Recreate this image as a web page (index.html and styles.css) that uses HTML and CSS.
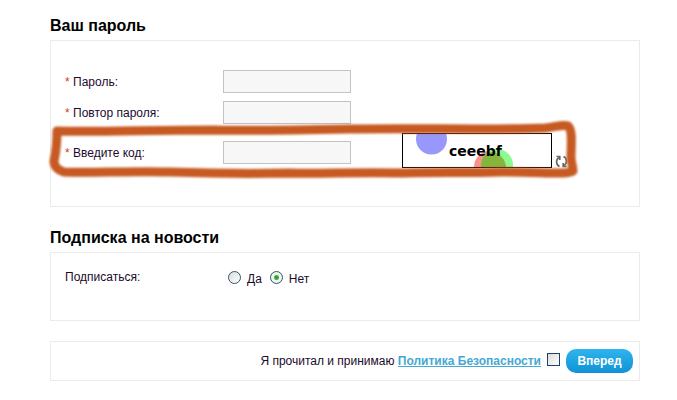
FILE: index.html
```html
<!DOCTYPE html>
<html lang="ru">
<head>
    <meta charset="UTF-8">
    <meta name="viewport" content="width=device-width, initial-scale=1.0">
    <title>Регистрация</title>
    <link rel="stylesheet" href="styles.css">
</head>
<body>

<form class="page">
    <h2>Ваш пароль</h2>
    <div class="panel password-panel">
        <div class="row">
            <label for="password"><span class="required">*</span> Пароль:</label>
            <input class="text-input" type="password" id="password">
        </div>
        <div class="row">
            <label for="confirm"><span class="required">*</span> Повтор пароля:</label>
            <input class="text-input" type="password" id="confirm">
        </div>
        <div class="row captcha-row">
            <label for="code"><span class="required">*</span> Введите код:</label>
            <input class="text-input" type="text" id="code">
            <div class="captcha">
                <svg width="150" height="35" viewBox="0 0 150 35">
                    <rect x="0.5" y="0.5" width="149" height="34" fill="#fff"/>
                    <circle cx="29.5" cy="6" r="15.5" fill="#9797fc"/>
                    <circle cx="88" cy="34" r="16" fill="#ff8f8f"/>
                    <circle cx="95" cy="32" r="16" fill="#8dfa8d"/>
                    <path d="M86 19A16 16 0 0 1 104 35H79A16 16 0 0 1 86 19z" fill="#85b53b"/>
                    <rect x="0.5" y="0.5" width="149" height="34" fill="none" stroke="#000"/>
                    <text class="captcha-text" x="47" y="23">ceeebf</text>
                </svg>
                <button class="refresh" type="button" aria-label="Обновить код">
                    <svg width="13" height="13" viewBox="0 0 13 13" fill="none" stroke="#666" stroke-width="1.6">
                        <path d="M4.500 11.500C1 10 0.500 5 3.800 2.500"/>
                        <path d="M1.500 1.500H4.800V5"/>
                        <path d="M8.500 1.500C12 3 12.500 8 9.200 10.500"/>
                        <path d="M11.500 11.500H8.200V8"/>
                    </svg>
                </button>
            </div>
            <svg class="marker" width="540" height="66" viewBox="45 118 540 66">
                <path d="M57 131C100 132 150 130 215 130C250 131 300 130 350 129C420 128 500 130 545 128C556 127 563 124 568 126C573 130 571 145 571 157C571 163 573 167 573 171C568 175 545 172 500 172C470 173 430 172 400 173C350 172 320 174 290 173C240 174 200 173 170 172C130 171 90 173 64 172C58 170 54 166 54 161C56 152 57 142 57 131Z"/>
            </svg>
        </div>
    </div>

    <h2>Подписка на новости</h2>
    <div class="panel news-panel">
        <div class="row">
            <span class="caption" id="news">Подписаться:</span>
            <div class="choices" role="radiogroup" aria-labelledby="news">
                <label><input type="radio" name="news" value="1">Да</label>
                <label><input type="radio" name="news" value="0" checked>Нет</label>
            </div>
        </div>
    </div>

    <div class="panel submit-panel">
        <label for="agree">Я прочитал и принимаю <a href="#">Политика Безопасности</a></label>
        <input type="checkbox" id="agree">
        <button class="submit" type="submit">Вперед</button>
    </div>
</form>

</body>
</html>
```
FILE: styles.css
```css
* {
    box-sizing: border-box;
}
body {
    margin: 0;
    background: #ffffff;
    color: #1c0a2c;
    font-family: "Liberation Sans", Arial, sans-serif;
    font-size: 12px;
    line-height: 16px;
}
.page {
    padding: 15px 37px 0 50px;
}
h2 {
    margin: 0 0 3px;
    color: #000000;
    font-size: 16px;
    line-height: 22px;
}
.panel {
    margin-bottom: 20px;
    padding: 0 14px;
    border: 1px solid #ebebeb;
}
.password-panel {
    display: flex;
    flex-direction: column;
    gap: 8px;
    padding-top: 29px;
    padding-bottom: 33px;
}
.row {
    display: flex;
    align-items: center;
}
.row > label, .caption {
    width: 158px;
}
.required {
    color: #d0402c;
}
.text-input {
    width: 128px;
    height: 23px;
    padding: 2px 4px;
    border: 1px solid #c3c3c3;
    background: #f7f7f7;
}

/* captcha */
.captcha-row {
    position: relative;
    height: 41px;
}
.captcha {
    display: flex;
    align-self: flex-start;
    align-items: flex-end;
    gap: 3px;
    margin-left: 51px;
    padding-top: 1px;
}
.captcha svg, .refresh {
    display: block;
}
.captcha-text {
    font-family: "DejaVu Sans", sans-serif;
    font-size: 14px;
    font-weight: bold;
    fill: #000000;
}
.refresh {
    padding: 0;
    border: none;
    background: none;
    cursor: pointer;
}
.marker {
    position: absolute;
    top: -14px;
    left: -20px;
    fill: none;
    stroke: #c65a22;
    stroke-width: 9px;
    stroke-linejoin: round;
    filter: blur(1px);
    pointer-events: none;
}

/* news */
.news-panel {
    padding-top: 16px;
    padding-bottom: 33px;
}
.news-panel .row {
    align-items: flex-start;
}
.choices {
    display: flex;
    gap: 8px;
    padding-left: 5px;
}
.choices label {
    display: flex;
    align-items: flex-start;
    gap: 6px;
    padding-top: 2px;
}
input[type="radio"] {
    appearance: none;
    width: 13px;
    height: 13px;
    margin: 0;
    border: 1px solid #2c5675;
    border-radius: 50%;
    background: linear-gradient(135deg, #dcdcd7, #ffffff);
}
input[type="radio"]:checked {
    background: radial-gradient(circle, #23a523 0, #3cae3c 2px, #f0f4ee 3px);
}

/* submit */
.submit-panel {
    display: flex;
    align-items: center;
    justify-content: flex-end;
    gap: 6px;
    height: 40px;
    padding: 0 6px;
}
a {
    color: #45a9d3;
    font-weight: bold;
}
input[type="checkbox"] {
    appearance: none;
    width: 13px;
    height: 13px;
    margin: 0 0 4px;
    border: 1px solid #1d4070;
    background: linear-gradient(135deg, #dcdcd7, #ffffff);
}
.submit {
    width: 67px;
    height: 24px;
    padding: 0;
    border: none;
    border-radius: 10px;
    background: linear-gradient(#2fb4ee, #0f93d6);
    color: #ffffff;
    font-family: inherit;
    font-size: 12px;
    font-weight: bold;
    cursor: pointer;
}
```
